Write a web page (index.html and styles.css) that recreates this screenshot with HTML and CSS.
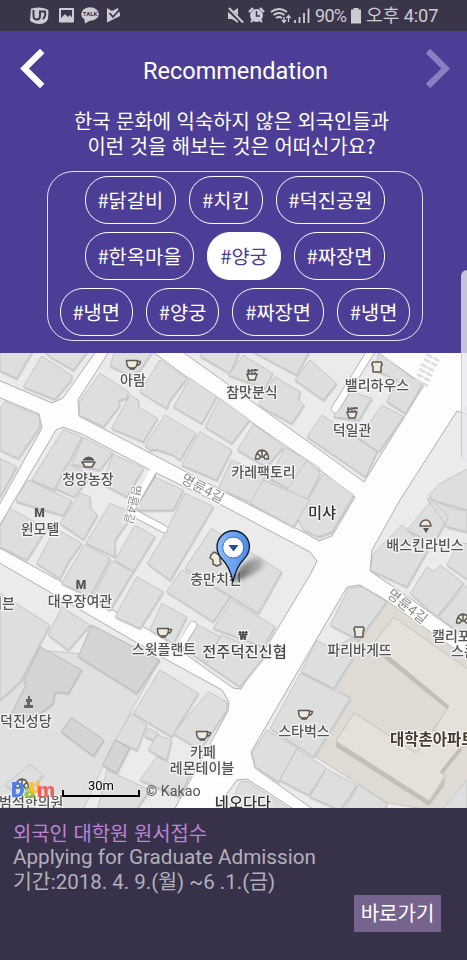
FILE: index.html
```html
<!DOCTYPE html>
<html lang="ko">
<head>
<meta charset="utf-8">
<title>Recommendation</title>
<link rel="stylesheet" href="styles.css">
</head>
<body>
<div class="phone">
  <header class="status">
    <svg class="status-left" width="92" height="18" viewBox="29 7 92 18">
      <path d="M31 9 Q31 8 39 7.5 Q48 8 48.500 11 L48 19 Q46 24 39 24 Q31 23 30 20Z" fill="#cfcbd4"/>
      <path d="M33.500 10 V16 Q33.500 19.500 37 19.500 Q40 19.500 40 16 V11.500 H45 Q46 16 43 19" fill="none" stroke="#3b354a" stroke-width="1.900"/>
      <path d="M60 8 H73 Q74 8 74 9 V21.500 Q74 22.500 73 22.500 H60 Q59 22.500 59 21.500 V9 Q59 8 60 8Z M61 10 V18 L65 14 L68 17 L70 15 L72 17.500 V10Z" fill="#cfcbd4" fill-rule="evenodd"/>
      <ellipse cx="90" cy="14" rx="8.800" ry="6.800" fill="#cfcbd4"/><path d="M84 17 L85 23.500 L91 20Z" fill="#cfcbd4"/>
      <text x="90" y="16.300" class="talk">TALK</text>
      <path d="M107 8 L112 11 L118 8 L120 14 L120 16 L107 22.500Z" fill="#cfcbd4"/>
      <path d="M109.500 13 L113 17 L120 9" fill="none" stroke="#3b354a" stroke-width="1.800"/>
    </svg>
    <div class="status-right">
      <svg width="84" height="18" viewBox="227 7 84 18">
        <path d="M228 12 H232 L238 8 V23 L232 19 H228Z" fill="#cfcbd4"/>
        <path d="M228 9 L243 23" stroke="#3b354a" stroke-width="4"/><path d="M229 8 L243 22.500" stroke="#cfcbd4" stroke-width="2"/>
        <path d="M249 12 L253 8 M264 12 L260 8 M251 22 L253 20 M262 22 L260 20" stroke="#cfcbd4" stroke-width="2.300"/>
        <circle cx="256.500" cy="15.500" r="6.500" fill="#cfcbd4"/><path d="M256.500 11 V16 H260" fill="none" stroke="#3b354a" stroke-width="1.500"/>
        <path d="M271 12 Q279 6 287 12 M273.500 15 Q279 11 284.500 15 M276 18 Q279 16 282 18" fill="none" stroke="#cfcbd4" stroke-width="1.800"/>
        <path d="M284 17 V22 M282 20 L284 22.500 L286 20 M288.500 22 V16 M286.500 18 L288.500 15.500 L290.500 18" fill="none" stroke="#cfcbd4" stroke-width="1.300"/>
        <path d="M295 20 V23 M299.500 17 V23 M304 13 V23 M308.500 8.500 V23" stroke="#cfcbd4" stroke-width="1.800"/>
      </svg>
      <span class="percent">90%</span>
      <svg width="12" height="18" viewBox="350 7 12 18"><path d="M353.500 8 H358.500 V9.500 H361 V23.500 H351 V9.500 H353.500Z" fill="#cfcbd4"/></svg>
      <span class="clock">오후 4:07</span>
    </div>
  </header>

  <section class="recommend">
    <div class="title-row">
      <svg width="26" height="42" viewBox="0 0 26 42"><path d="M22.200 3 L4.500 20.500 L22.200 38" fill="none" stroke="#fff" stroke-width="6.200"/></svg>
      <h1>Recommendation</h1>
      <svg width="26" height="42" viewBox="0 0 26 42"><path d="M3 3 L20.700 20.500 L3 38" fill="none" stroke="#8a7fc0" stroke-width="6.200"/></svg>
    </div>
    <p class="question">한국 문화에 익숙하지 않은 외국인들과<br>이런 것을 해보는 것은 어떠신가요?</p>
    <div class="tags">
      <div class="tag-row"><span class="tag">#닭갈비</span><span class="tag">#치킨</span><span class="tag">#덕진공원</span></div>
      <div class="tag-row"><span class="tag">#한옥마을</span><span class="tag on">#양궁</span><span class="tag">#짜장면</span></div>
      <div class="tag-row"><span class="tag">#냉면</span><span class="tag">#양궁</span><span class="tag">#짜장면</span><span class="tag">#냉면</span></div>
    </div>
  </section>

  <svg class="map" width="467" height="455" viewBox="0 353 467 455">
    <defs>
      <filter id="drop" x="-5%" y="-5%" width="110%" height="110%"><feDropShadow dx="0.500" dy="1.600" stdDeviation="0.400" flood-color="#c8c9c8"/></filter>
      <filter id="soft" x="-30%" y="-50%" width="160%" height="200%"><feGaussianBlur stdDeviation="2"/></filter>
      <linearGradient id="pin" x1="0" x2="1"><stop offset="0" stop-color="#8fbdf8"/><stop offset="1" stop-color="#4a8ae6"/></linearGradient>
      <linearGradient id="shade" x1="0" x2="1"><stop offset="0" stop-color="#444" stop-opacity=".9"/><stop offset="1" stop-color="#777" stop-opacity=".35"/></linearGradient>
      <g id="cup"><path d="M-6.500 -3.500 H4.500 Q4.500 3.500 1 4 H-3 Q-6.500 3.500 -6.500 -3.500Z M4.500 -2.500 H7.500 Q7 1.500 3.500 1 M-3.500 5 H2" class="ico"/></g>
      <g id="bowl"><path d="M-5 0 H5 L3 6 H-3Z M-5 -2.500 L6 -4 M-3.500 -5 V0 M0 -5 V0 M3 -5 V0" class="ico"/></g>
      <g id="bread"><path d="M-4 -5 H4 Q6 -3 4 0 V5 H-4 V0 Q-6 -3 -4 -5Z" class="ico"/></g>
      <g id="pie"><path d="M-6.500 4 Q-6 -4.500 0 -5 Q6 -4.500 6.500 4 H3 L2 2 H-2 L-3 4Z M0 -5 V1 M-5 -2 L-1 2 M5 -2 L1 2" class="ico"/></g>
    </defs>

    <!-- city blocks between the roads -->
    <g class="block">
      <path d="M-2 350 H97 L63 398 L52 403 L-2 380Z"/>
      <path d="M-2 397 L39 414 L42 428 L-2 507Z"/>
      <path d="M56 430 L63 427 L82 434 L150 470 L212 500 L310 552 L317 561 L310 575 L241 689 L233 688 L160 636 L-2 547 V528Z"/>
      <path d="M-2 562 L158 655 L222 690 L229 702 L228 711 L174 810 H-2Z"/>
      <path d="M110 350 H150 L187 377 L217 397 L250 421 L283 444 L307 460 L355 497 L332 536 L319 541 L307 534 L240 500 L150 453 L79 416 L78 400Z"/>
      <path d="M180 350 L310 443 L364 482 L424 385 L374 350Z"/>
      <path d="M457 411 L400 500 L372 550 L370 571 L408 597 L452 628 L469 641 V415Z"/>
      <path d="M347 587 L360 585 L387 601 L469 659 V810 H314 L255 768 L251 752Z"/>
      <path d="M215 810 L237 780 L247 779 L295 810Z"/>
    </g>

    <!-- church lot and apartment complex ground -->
    <path class="lot" d="M36 650 L160 660 L130 713 L100 773 L83 810 H-2 V700Z"/>
    <path class="beige" d="M387 601 L469 659 V810 H430 L387 803 L357 783 L314 756 L351 698 L333 687 L320 672 L330 650 L366 630Z"/>

    <g class="building" filter="url(#drop)">
      <g transform="translate(0 350) scale(.33333)">
        <path d="M0 0H100L50 85L0 62Z M125 18L215 75L215 88L165 148L70 110Z M130 0H265L220 60L150 20Z M15 155L118 198L120 230L55 325L0 300V175Z M0 325L50 350L0 440Z M190 238L245 260L165 420L95 390Z M300 70L385 125L380 145L355 150L360 165L310 230L238 195V155Z M345 0H460L420 60L390 75L330 48Z M390 135L415 150V170L472 205L430 275L335 235Z M480 30L560 85L510 150L500 175L420 125Z M250 262L338 308L300 360L215 342Z M340 312L430 355L380 440L305 400Z M200 340L275 375L222 440L165 415Z M85 390L215 452L190 496L50 455V440Z"/>
      </g>
      <g transform="translate(150 350) scale(.33333)">
        <path d="M120 85L200 140L155 220L70 170Z M210 145L298 210L245 280L165 230Z M310 222L400 290L350 350L262 300Z M405 292L480 335L510 355L460 440L360 385Z M45 195L138 250L90 330L70 315L20 298L0 300L-15 285Z M150 245L245 300L200 390L95 345Z M245 330L345 375L310 460L205 415Z M350 385L460 440L440 500L320 450Z M160 0H270L240 70L150 18Z M280 15L368 70L345 115L235 75Z M375 80L450 125L445 150L462 165L425 220L325 165Z M300 0H480L440 75Z M480 30L560 100L520 150L435 90Z M0 375L100 420L70 480L-50 480Z M105 430L190 470L60 690L-8 640L40 560Z"/>
      </g>
      <g transform="translate(307 350) scale(.33333)">
        <path d="M215 8L345 105L295 190L240 155L270 90L205 60Z M120 120L195 145L155 210L80 200Z M225 165L290 200L215 305L155 265Z M45 195L210 305L175 380L0 260Z M0 330L40 370L0 450L-60 420Z M50 370L140 435L75 545L35 560L-10 540L-30 500Z M485 355L400 400L365 435L380 450L440 480H485Z M375 450L425 500L380 580L300 540Z M285 525L362 600L300 710L190 660L200 610Z M360 445L480 480V545L420 530Z M485 580H455L420 645L485 690Z M400 645L470 700L390 800L310 730L360 650L380 665Z M485 700L395 800L485 870Z M125 715L165 710L238 755L155 870L70 825Z"/>
      </g>
      <g transform="translate(150 500) scale(.33333)">
        <path d="M185 85L395 215L325 340L105 205Z M95 210L240 290L190 365L50 275Z M245 300L375 380L340 440L190 385Z M340 -60L480 0L430 80L300 10Z M35 310L110 350L70 430L0 390Z M135 370L210 410L170 490L90 440Z M215 405L350 460L270 560L160 485Z"/>
      </g>
      <g transform="translate(0 500) scale(.33333)">
        <path d="M30 25L140 85L80 180L0 140V80Z M240 -20L270 -10V20L292 45L250 118L180 70Z M165 85L245 130L205 185L180 235L110 190Z M330 10L400 40L345 120V170L258 130Z M405 75L465 110L400 215L345 180Z M255 132L330 175L270 290L185 250Z M335 182L400 215L330 330L275 300Z M410 230L490 275L420 385L345 350Z M185 320L270 375L205 450L145 405Z M0 280L150 375L60 545L0 600Z"/>
      </g>
      <g transform="translate(0 650) scale(.33333)">
        <path d="M480 60L595 130L530 235L515 260L400 190Z M625 125L680 155V180L600 300L520 250Z M395 190L440 225L410 300L345 270Z M445 235L475 250L460 270L435 260Z M470 255L515 270L500 330L445 300Z M470 320L570 370L540 440L420 390Z M320 360L450 420L400 490H290Z M90 343L130 375L70 440L15 405Z"/>
      </g>
      <g transform="translate(227 650) scale(.33333)">
        <path d="M220 70L370 145L260 320L130 235Z M270 -28L378 22L320 115L222 65Z M120 240L210 295L155 395L85 350L75 310Z M210 297L298 355L245 435L158 390Z M298 357L390 405L340 480L248 440Z M395 405L480 460L470 485H350Z M720 390L640 485H720Z M0 485L40 395H60L200 485Z"/>
      </g>
      <g transform="translate(0 650) scale(.33333)" class="dark">
        <path d="M275 -75L478 30L410 130L235 20Z M120 -10L245 60L205 130L165 125L160 160L95 210L35 190L80 100L70 95Z M215 203L312 270L280 318L183 245Z M345 270L388 295L350 370L308 345Z"/>
      </g>
    </g>

    <g class="apartment">
      <path class="side" d="M336 742 L430 801 L445 778 L444 786 L429 806 L336 747Z M386 654 L450 705 L448 710 L379 654Z M440 770 L459 747 L462 750 L443 774Z"/>
      <path d="M354 713 L416 753 L422 747 L438 722 L469 746 L459 748 L440 772 L445 776 L429 801 L336 741Z"/>
      <path d="M394 617 L469 670 V748 L434 730 L449 706 L378 647 L374 643Z"/>
    </g>

    <!-- dead-end lanes -->
    <g class="lane-edge"><path d="M373 348 L335 409 M152 475 L130 511 L164 529 M193 625 L181 646"/></g>
    <g class="lane"><path d="M373 348 L335 409 M154 469 L130 511 L164 529 M193 625 L179 648"/></g>
    <path class="walk" d="M426 354 L439 361 M424 359 L437 366 M421 364 L434 371 M419 369 L432 376 M417 374 L430 381 M415 379 L428 386 M464 408 L469 411"/>

    <g class="street">
      <text transform="translate(180 482) rotate(28)">명륜4길</text>
      <text transform="translate(386 596) rotate(38)">명륜4길</text>
      <text transform="translate(133 484) rotate(103)" class="narrow">명륜4길</text>
    </g>

    <use href="#cup" x="133" y="364"/><use href="#bowl" x="252" y="374"/><use href="#bread" x="377" y="367"/><use href="#bowl" x="352" y="412"/>
    <use href="#pie" x="262" y="455"/><use href="#cup" x="164" y="632"/><use href="#bread" x="359" y="632"/><use href="#cup" x="203" y="735"/>
    <use href="#cup" x="305" y="714"/><use href="#pie" x="463" y="619"/><use href="#pie" x="22" y="784"/>
    <path class="ico" d="M82 462 H95 L92 467 H85Z"/><path d="M83 460 Q89 454 94 460Z" fill="#555" stroke="#555"/>
    <path class="ico" d="M420 526 Q421 520 426 520 Q430 520 431 526Z"/><path d="M423 528 H429 L426 533Z" fill="#555"/>
    <path d="M24 708 V705 H27 V702 H26 V699 H28 V696 H30 V699 H32 V702 H30 V705 H33 V708Z" fill="#666"/>
    <path class="ico" d="M211 555 L214 552 L216 553 L220 556 L220 561 L221 564 L217 566 L213 564 L213 560 L210 558Z"/>

    <g class="labels">
      <text x="133" y="385">아람</text><text x="252" y="397">참맛분식</text><text x="377" y="390">밸리하우스</text><text x="352" y="435">덕일관</text>
      <text x="263.500" y="477">카레팩토리</text><text x="88" y="484">청양농장</text><text x="40" y="534">윈모텔</text><text x="80" y="606">대우장여관</text>
      <text x="-11" y="608" class="start">레븐</text><text x="425" y="550">배스킨라빈스</text><text x="216" y="584">충만치킨</text><text x="164" y="654">스윗플랜트</text>
      <text x="359.500" y="655">파리바게뜨</text><text x="432" y="641" class="start">캘리포</text><text x="451" y="656" class="start">스콘</text>
      <text x="0" y="726" class="start">덕진성당</text><text x="304" y="736">스타벅스</text><text x="203" y="757">카페</text><text x="202" y="773">레몬테이블</text>
      <text x="-1" y="807" class="start">범석한의원</text>
      <text x="39.500" y="517" class="mark wide">M</text><text x="81" y="589" class="mark wide">M</text><text x="243" y="640" class="mark">₩</text>
      <text x="322" y="518" class="major">미샤</text><text x="244.500" y="657" class="major mid">전주덕진신협</text><text x="243" y="808" class="major">네오다다</text>
      <text x="390" y="745" class="major brown start">대학촌아파트</text>
    </g>

    <!-- position pin -->
    <path d="M233 582 Q241 560 258 558 Q270 562 258 571 Q247 578 233 582Z" fill="url(#shade)" filter="url(#soft)"/>
    <path d="M233 582 Q230 567 222 559 Q217 554 217 547 A16.200 16.200 0 0 1 249.500 547 Q249 554 244 559 Q236 567 233 582Z" fill="url(#pin)" stroke="#111a2c" stroke-width="1.300"/>
    <circle cx="233.200" cy="547.500" r="10.500" fill="#fff" stroke="#3b6cb5" stroke-width="1"/><path d="M228.500 545 H238.500 L233.500 551.500Z" fill="#1e4e9b"/>

    <!-- provider mark, scale and copyright -->
    <g class="brand"><text x="11" y="797" fill="#4c80e8">D</text><text x="24" y="798" fill="#92c83e">a</text><text x="29" y="793" fill="#f9c032">u</text><text x="37" y="797" fill="#f0625c" textLength="18" lengthAdjust="spacingAndGlyphs">m</text></g>
    <path d="M63 790 V796 H139 V790" fill="none" stroke="#000" stroke-width="2"/>
    <text x="88" y="790" class="scale">30m</text><text x="146" y="796" class="copy">© Kakao</text>
  </svg>

  <footer class="notice">
    <p class="notice-title">외국인 대학원 원서접수</p>
    <p class="en">Applying for Graduate Admission</p>
    <p class="date">기간:2018. 4. 9.(월) ~6 .1.(금)</p>
    <button class="go">바로가기</button>
  </footer>
  <div class="edge-handle"></div>
</div>
</body>
</html>
```
FILE: styles.css
```css
* { box-sizing: border-box; }
body { margin: 0; font-family: Roboto, "Noto Sans CJK KR", sans-serif; }
.phone { position: relative; width: 467px; height: 960px; display: flex; flex-direction: column; overflow: hidden; }
p, h1 { margin: 0; font-weight: 400; }

.status { height: 31px; flex: none; background: #3b354a; display: flex; justify-content: space-between; align-items: center; padding: 1px 28px 0 29px; color: #cfcbd4; }
.status svg { display: block; }
.status-right { display: flex; align-items: center; line-height: 30px; white-space: nowrap; }
.percent { font-size: 18px; width: 32px; margin: 0 3px 0 4px; letter-spacing: -.7px; }
.clock { font-size: 18.200px; margin-left: 4px; width: 73px; letter-spacing: -.1px; }
.talk { font: 700 6px Roboto, sans-serif; text-anchor: middle; fill: #3b354a; }

.recommend { height: 322px; flex: none; background: #4c3e96; color: #fff; }
.title-row { height: 78px; padding: 0 16px 2px 20px; display: flex; align-items: center; justify-content: space-between; }
.title-row h1 { font-size: 23.500px; padding-top: 3px; letter-spacing: -.02px; }
.question { height: 62px; text-align: center; font-size: 19.900px; line-height: 24.500px; padding-right: 4px; font-family: "Noto Sans CJK KR", sans-serif; }
.tags { width: 376px; height: 170px; margin-left: 47px; border: 1px solid #e6e2f5; border-radius: 26px; padding-top: 4px; display: flex; flex-direction: column; gap: 8px; }
.tag-row { display: flex; justify-content: center; gap: 13px; }
.tag { height: 48px; padding: 0 12px; border: 1.400px solid #fff; border-radius: 23px; font: 19.800px/45px "Noto Sans CJK KR", sans-serif; white-space: nowrap; }
.tag.on { background: #fff; color: #4c3e96; }

.map { display: block; flex: none; background: #fdfdfd; }
.block { fill: #ebebeb; stroke: #b0b0b0; stroke-width: 1; }
.lot { fill: #dfe1e0; stroke: #c6c7c6; }
.beige { fill: #dfdad4; stroke: #c9c4be; }
.building { fill: #dcdfde; stroke: #c5c7c6; stroke-width: 3; stroke-linejoin: round; }
.dark { fill: #d3d5d4; stroke: #b8b9b8; }
.apartment { fill: #e5e0da; stroke: #c6c1bb; stroke-width: 1; }
.apartment .side { fill: #c3beb8; stroke: none; }
.lane, .lane-edge { fill: none; stroke-linecap: round; stroke-linejoin: round; }
.lane { stroke: #fff; stroke-width: 6.500; }
.lane-edge { stroke: #bbb; stroke-width: 8.500; }
.walk { stroke: #e0e0e0; stroke-width: 3; stroke-dasharray: 7 1; }
.ico { fill: #efeadc; stroke: #5c5955; stroke-width: 1.500; stroke-linejoin: round; }
.labels { font: 500 14px "Noto Sans CJK KR", sans-serif; fill: #555; stroke: #f6f6f6; stroke-width: 2.500px; stroke-linejoin: round; paint-order: stroke; text-anchor: middle; }
.labels .start { text-anchor: start; }
.labels .major { font-size: 15.300px; fill: #333; }
.labels .mid { fill: #4a4a4a; }
.labels .brown { fill: #4a3a2c; font-size: 15.500px; font-weight: 700; }
.labels .mark { font: 900 12px Roboto, "Noto Sans CJK KR", sans-serif; }
.labels .wide { stroke: none; font-size: 12px; }
.street { font: 14px "Noto Sans CJK KR", sans-serif; fill: #8c8c8c; stroke: #fff; stroke-width: 2px; paint-order: stroke; }
.street .narrow { font-size: 12px; }
.brand { font: 900 21px Roboto, sans-serif; }
.scale { font: 13px Roboto, sans-serif; fill: #000; stroke: #eee; stroke-width: 2px; paint-order: stroke; }
.copy { font: 14.300px Roboto, sans-serif; fill: #555; }

.notice { flex: 1; background: #37324a; color: #b3b0bb; padding: 12px 26px 0 13px; display: flex; flex-direction: column; }
.notice p { height: 25px; line-height: 25px; white-space: nowrap; }
.notice .notice-title { color: #bd82d3; font-size: 19.900px; font-family: "Noto Sans CJK KR", sans-serif; }
.en { font-size: 20.700px; }
.date { font-size: 20.500px; }
.go { align-self: flex-end; width: 87px; height: 37px; border: 0; padding: 0 0 2px; background: #76648f; color: #fff; font: 20px "Noto Sans CJK KR", sans-serif; }
.edge-handle { position: absolute; right: 0; top: 270px; width: 6px; height: 190px; border-radius: 6px 0 0 6px; background: rgba(235, 232, 240, .78); border-left: 1px solid rgba(190, 188, 200, .7); }
```
